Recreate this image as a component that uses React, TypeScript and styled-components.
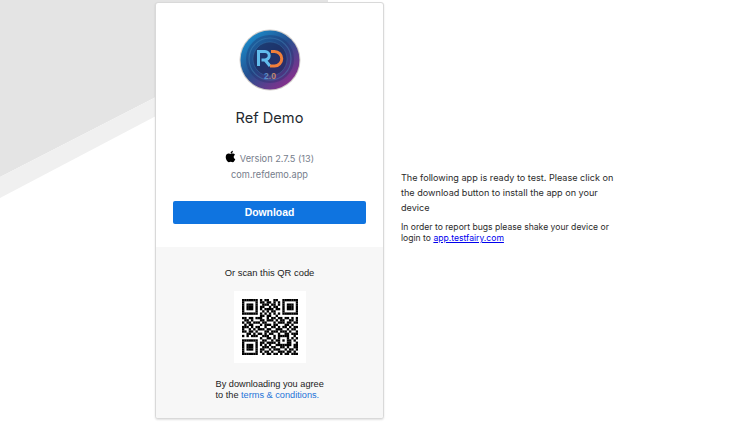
import styled, { createGlobalStyle } from 'styled-components';

const GlobalStyle = createGlobalStyle`
    html, body {
        margin: 0;
        height: 100%;
        background: #fff;
        overflow: hidden;
    }
`;
const Page = styled.div`
    position: relative;
    width: 750px;
    height: 431px;
    padding: 2px 0 0 155px;
    box-sizing: border-box;
    display: flex;
    align-items: flex-start;
    overflow: hidden;
    font-family: Inter, "Liberation Sans", sans-serif;
`;
const Backdrop = styled.svg`
    position: absolute;
    left: 0;
    top: 0;
`;
const Card = styled.div`
    position: relative;
    width: 229px;
    height: 417px;
    box-sizing: border-box;
    flex: none;
    background: #fff;
    border: 1px solid #d9d9d9;
    border-radius: 3px;
    box-shadow: 0 1px 2px rgba(0, 0, 0, 0.12);
    display: flex;
    flex-direction: column;
    overflow: hidden;
`;
const Top = styled.div`
    height: 244px;
    flex: none;
    padding-top: 26px;
    box-sizing: border-box;
    display: flex;
    flex-direction: column;
    align-items: center;
`;
const Logo = styled.svg`
    display: block;
`;
const AppName = styled.div`
    margin-top: 17px;
    font-size: 14.6px;
    line-height: 20px;
    color: #24292f;
`;
const VersionRow = styled.div`
    margin-top: 22px;
    height: 16px;
    display: flex;
    align-items: center;
    gap: 4px;
    font-size: 9.2px;
    color: #767d8b;
`;
const BundleId = styled.div`
    margin-top: 2px;
    font-size: 9.2px;
    line-height: 14px;
    color: #767d8b;
`;
const DownloadButton = styled.button`
    margin-top: 19px;
    width: 193px;
    height: 23px;
    border: 0;
    border-radius: 2px;
    background: #0f74e0;
    color: #fff;
    font-family: "Liberation Sans", Arial, sans-serif;
    font-size: 10.4px;
    font-weight: 700;
    padding: 0;
`;
const Bottom = styled.div`
    flex: 1;
    background: #f7f7f7;
    display: flex;
    flex-direction: column;
    align-items: center;
    padding-top: 20px;
    font-family: "Liberation Sans", Arial, sans-serif;
    font-size: 9.4px;
    color: #222;
`;
const ScanLabel = styled.div`
    line-height: 12px;
`;
const QrBox = styled.div`
    margin-top: 12px;
    width: 72px;
    height: 72px;
    background: #fff;
    display: flex;
    align-items: center;
    justify-content: center;
`;
const Terms = styled.div`
    margin-top: 16px;
    width: 108px;
    font-size: 9.2px;
    line-height: 11px;
    white-space: nowrap;
`;
const TermsLink = styled.span`
    color: #1f74d8;
`;
const Message = styled.div`
    margin: 168px 0 0 17px;
    width: 222px;
    position: relative;
    color: #2b2b2b;
`;
const Lead = styled.p`
    margin: 0;
    font-size: 9.1px;
    line-height: 15px;
`;
const Note = styled.p`
    margin: 7px 0 0;
    font-size: 8.6px;
    line-height: 11px;
`;
const MailLink = styled.a`
    color: #0000ee;
    text-decoration: underline;
`;

const QR_ROWS = [
    '1111111' + '0' + '101100110' + '0' + '1111111',
    '1000001' + '0' + '110110101' + '0' + '1000001',
    '1011101' + '0' + '011101101' + '0' + '1011101',
    '1011101' + '0' + '110010110' + '0' + '1011101',
    '1011101' + '0' + '101111011' + '0' + '1011101',
    '1000001' + '0' + '010101100' + '0' + '1000001',
    '1111111' + '0' + '101010101' + '0' + '1111111',
    '0000000' + '0' + '110110010' + '0' + '0000000',
    '1101101110010110110110101',
    '0110100011011101011001101',
    '1011011101100010111011011',
    '0101100010111011000110100',
    '1110101100100110101101011',
    '1001010111011001110010110',
    '1101101000110111011101001',
    '0011010110101100100110111',
    '1010111001110010111110010',
    '0000000010011010100010101',
    '1111111001100101101011010',
    '1000001011011110100011001',
    '1011101010101001111111011',
    '1011101001110110011010011',
    '1011101011001011100101101',
    '1000001010110100111011010',
    '1111111001011011010110111',
];

function QrCode() {
    return (
        <svg width="56" height="56" viewBox="0 0 25 25" aria-label="QR code">
            {QR_ROWS.map((row, y) =>
                row.split('').map((cell, x) =>
                    cell === '1' ? <rect key={`${x}-${y}`} x={x} y={y} width="1.05" height="1.05" fill="#000" /> : null
                )
            )}
        </svg>
    );
}

function AppLogo() {
    return (
        <Logo width="62" height="62" viewBox="0 0 62 62">
            <defs>
                <linearGradient id="disc" x1="0.1" y1="0.1" x2="0.85" y2="0.95">
                    <stop offset="0" stopColor="#1a8ccb" />
                    <stop offset="0.45" stopColor="#25508f" />
                    <stop offset="1" stopColor="#8f2c8c" />
                </linearGradient>
                <linearGradient id="version" x1="0" y1="0" x2="1" y2="0">
                    <stop offset="0" stopColor="#3f8fe0" />
                    <stop offset="1" stopColor="#e08a50" />
                </linearGradient>
            </defs>
            <circle cx="31" cy="31" r="30.5" fill="#cfcbc8" />
            <circle cx="31" cy="31" r="29.5" fill="url(#disc)" />
            <circle cx="31" cy="30" r="24" fill="#1e2f6a" fillOpacity="0.35" />
            <circle cx="31" cy="30" r="21" fill="none" stroke="#4a90c0" strokeOpacity="0.4" strokeWidth="1.2" />
            <circle cx="31" cy="30" r="17" fill="#1b2658" fillOpacity="0.55" />
            <circle cx="31" cy="30" r="17" fill="none" stroke="#4a90c0" strokeOpacity="0.3" strokeWidth="1" />
            <path d="M19.5 37V22.5h6.5a4.2 4.2 0 0 1 0 8.4h-3.5M26 31l5 6" fill="none" stroke="#62bcec" strokeWidth="3" />
            <path d="M32 22.5h3.5a7.2 7.2 0 0 1 0 14.5H31" fill="none" stroke="#f07f3a" strokeWidth="3" />
            <text x="31" y="50" textAnchor="middle" fontFamily="Liberation Sans, sans-serif" fontSize="8.5" fontWeight="700" fill="url(#version)">2.0</text>
        </Logo>
    );
}

function AppleIcon() {
    return (
        <svg width="11" height="13" viewBox="0 0 384 512" fill="#000" style={{ marginTop: -3 }}>
            <path d="M318.7 268.7c-.2-36.7 16.4-64.4 50-84.8-18.8-26.9-47.2-41.7-84.7-44.6-35.5-2.8-74.3 20.7-88.5 20.7-15 0-49.4-19.7-76.4-19.7C63.3 141.2 4 184.8 4 273.5q0 39.3 14.4 81.2c12.8 36.7 59 126.7 107.2 125.2 25.2-.6 43-17.9 75.8-17.9 31.8 0 48.3 17.9 76.4 17.9 48.6-.7 90.4-82.5 102.6-119.3-65.2-30.7-61.7-90-61.7-91.9zm-56.6-164.2c27.3-32.4 24.8-61.9 24-72.5-24.1 1.4-52 16.4-67.9 34.9-17.5 19.8-27.8 44.3-25.6 71.9 26.1 2 49.9-11.4 69.5-34.3z" />
        </svg>
    );
}

function App() {
    return (
        <Page>
            <GlobalStyle />
            <Backdrop width="750" height="431" viewBox="0 0 750 431">
                <polygon points="0,0 328,0 328,2 156,97 0,177" fill="#e4e4e4" />
                <polygon points="0,177 156,97 156,116 0,198" fill="#f0f0f0" />
            </Backdrop>
            <Card>
                <Top>
                    <AppLogo />
                    <AppName>Ref Demo</AppName>
                    <VersionRow>
                        <AppleIcon />
                        Version 2.7.5 (13)
                    </VersionRow>
                    <BundleId>com.refdemo.app</BundleId>
                    <DownloadButton>Download</DownloadButton>
                </Top>
                <Bottom>
                    <ScanLabel>Or scan this QR code</ScanLabel>
                    <QrBox>
                        <QrCode />
                    </QrBox>
                    <Terms>
                        By downloading you agree
                        <br />
                        to the <TermsLink>terms &amp; conditions.</TermsLink>
                    </Terms>
                </Bottom>
            </Card>
            <Message>
                <Lead>The following app is ready to test. Please click on the download button to install the app on your device</Lead>
                <Note>
                    In order to report bugs please shake your device or login to <MailLink href="#">app.testfairy.com</MailLink>
                </Note>
            </Message>
        </Page>
    );
}

export default App;
